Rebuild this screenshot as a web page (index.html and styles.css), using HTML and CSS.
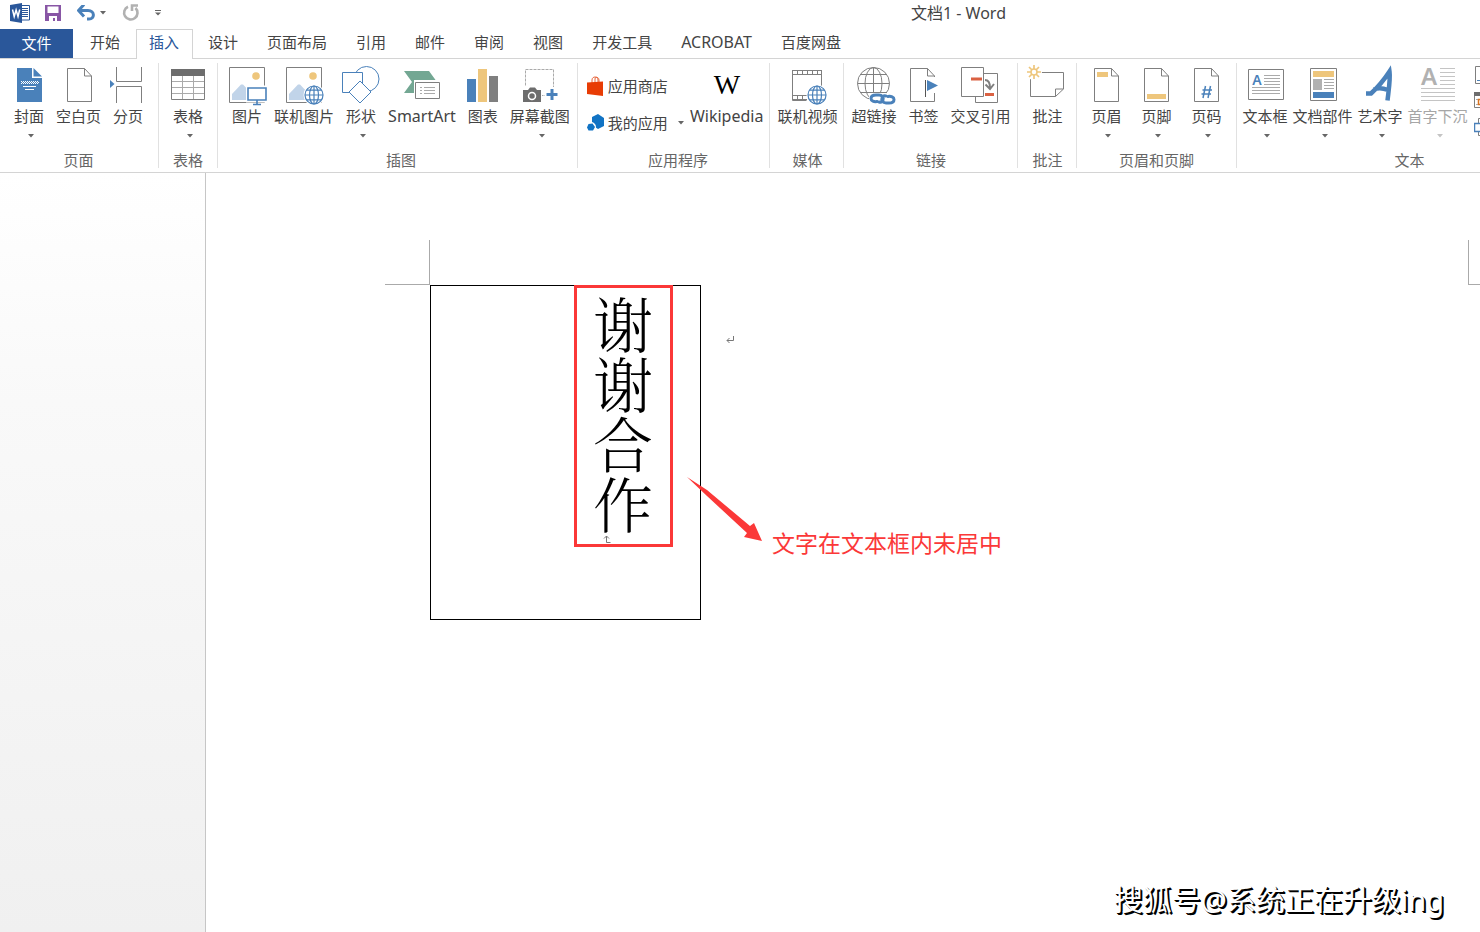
FILE: index.html
```html
<!DOCTYPE html>
<html lang="zh-CN">
<head>
<meta charset="utf-8">
<title>文档1 - Word</title>
<link rel="stylesheet" href="styles.css">
</head>
<body>
<svg class="defs" aria-hidden="true">
  <defs>
    <symbol id="caret" viewBox="0 0 10 4"><path d="M4 0h6l-3 3.500z" fill="currentColor"/></symbol>
    <g id="page"><path d="M8.500 4.500h17l7 7.500v25.500h-24z" fill="#fff" stroke="#7f7f7f"/><path d="M25.500 4.500v7.500h7" fill="none" stroke="#7f7f7f"/></g>
    <g id="globe"><circle r="10.500" fill="#fff"/><g fill="none" stroke="#4a81ba" stroke-width="1.200"><circle r="9"/><ellipse rx="4.500" ry="9"/><path d="M0-9v18M-9 0h18M-7.500-4.800h15M-7.500 4.800h15"/></g></g>
    <g id="photo"><path d="M2.500 3.500h35v35h-35z" fill="#fff" stroke="#7f7f7f"/><circle cx="29" cy="12" r="3.800" fill="#eec67c"/><path d="M5 36v-6l9-9.500h2l10 10.500v5z" fill="#c1d4e9"/></g>
  </defs>
</svg>
<div class="app">
  <header class="titlebar">
    <div class="quick">
      <svg class="quick-word" width="20" height="20" viewBox="0 0 20 20"><path d="M11 2.500h8.500v14.500h-8.500z" fill="#fff" stroke="#2a579a"/><path d="M12 5.500h6M12 7.500h6M12 9.500h6M12 11.500h6M12 13.500h6" stroke="#2a579a"/><path d="M0 2l12-2v20l-12-2z" fill="#2a579a"/><path d="M2.500 6.500l1.700 7 1.900-6.500 1.900 6.500 1.700-7" fill="none" stroke="#fff" stroke-width="1.500"/></svg>
      <button class="quick-btn quick-btn--save" aria-label="保存"><svg width="16" height="16" viewBox="0 0 16 16"><path d="M0 0h16v16h-16z" fill="#8856a5"/><path d="M2.500 1.500h11v6.500h-11zM4 11h8v5h-2v-3h-2v3h-4z" fill="#fff"/></svg></button>
      <button class="quick-btn quick-btn--undo" aria-label="撤消"><svg width="18" height="16" viewBox="0 0 18 16"><path d="M2 5.500h9c7 0 7 8.500 1 8.500h-2" fill="none" stroke="#4a81ba" stroke-width="3"/><path d="M7-.5L1.500 5.500 7 11.500" fill="none" stroke="#4a81ba" stroke-width="3"/></svg><svg class="caret" width="10" height="4"><use href="#caret"/></svg></button>
      <button class="quick-btn quick-btn--redo" aria-label="重复"><svg width="18" height="18" viewBox="0 0 18 18"><path d="M6 2.700A6.700 6.700 0 1 0 13.500 4" fill="none" stroke="#b1b1b1" stroke-width="2.600"/><path d="M10 7V1.500h6" fill="none" stroke="#b1b1b1" stroke-width="2.600"/></svg></button>
      <button class="quick-btn" aria-label="自定义快速访问工具栏"><svg width="6" height="6" viewBox="0 0 6 6"><path d="M0 .5h6" stroke="#666"/><path d="M0 2.500h6l-3 3z" fill="#666"/></svg></button>
    </div>
    <h1 class="title">文档1 - Word</h1>
  </header>

  <nav class="tabs">
    <button class="tab tab--file">文件</button>
    <button class="tab">开始</button>
    <button class="tab tab--active">插入</button>
    <button class="tab">设计</button>
    <button class="tab">页面布局</button>
    <button class="tab">引用</button>
    <button class="tab">邮件</button>
    <button class="tab">审阅</button>
    <button class="tab">视图</button>
    <button class="tab">开发工具</button>
    <button class="tab latin">ACROBAT</button>
    <button class="tab">百度网盘</button>
  </nav>

  <div class="ribbon">
    <section class="group group--pages">
      <div class="tools">
        <button class="tool"><svg class="icon" viewBox="0 0 40 42"><path d="M8 4h15v10h10v24h-25z" fill="#4a81ba"/><path d="M24.500 4l8.500 8.500h-8.500z" fill="#4a81ba"/><path d="M12 17.500h17M12 19.500h17" stroke="#fff" stroke-dasharray="1 1"/><path d="M13 18.500h17" stroke="#fff" stroke-dasharray="1 1"/><path d="M14 22.500h13M16 25.500h9" stroke="#fff"/></svg>封面<svg class="caret" width="10" height="4"><use href="#caret"/></svg></button>
        <button class="tool"><svg class="icon" viewBox="0 0 40 42"><use href="#page"/></svg>空白页</button>
        <button class="tool"><svg class="icon" viewBox="0 0 40 42"><path d="M8.500 3v14.500h25V3M8.500 39V22.500h25V39" fill="none" stroke="#7f7f7f"/><path d="M2 16l4.500 4-4.500 4z" fill="#4a81ba"/></svg>分页</button>
      </div>
      <h2 class="group-name">页面</h2>
    </section>
    <section class="group">
      <div class="tools">
        <button class="tool"><svg class="icon" viewBox="0 0 40 42"><path d="M3.500 5.500h33v30h-33z" fill="#fff" stroke="#7f7f7f"/><path d="M3 5h34v7h-34z" fill="#6d6d6d"/><path d="M4 17.500h32M4 23.500h32M4 29.500h32M14.500 12v23M25.500 12v23" stroke="#aaa"/></svg>表格<svg class="caret" width="10" height="4"><use href="#caret"/></svg></button>
      </div>
      <h2 class="group-name">表格</h2>
    </section>
    <section class="group group--art">
      <div class="tools">
        <button class="tool"><svg class="icon" viewBox="0 0 40 42"><use href="#photo"/><path d="M19 21.500h23v17h-23z" fill="#fff"/><path d="M21 24h18v12h-18zM26 40.500h8M30 36v5" fill="#fff" stroke="#4a81ba" stroke-width="1.600"/></svg>图片</button>
        <button class="tool"><svg class="icon" viewBox="0 0 40 42"><use href="#photo"/><use href="#globe" x="30" y="31"/></svg>联机图片</button>
        <button class="tool"><svg class="icon" viewBox="0 0 40 42"><g fill="#fff" stroke="#4a81ba"><circle cx="25.500" cy="15" r="12.500"/><path d="M1.500 8.500h20v20h-20z"/><path d="M19 17l11 11-11 11-11-11z"/></g></svg>形状<svg class="caret" width="10" height="4"><use href="#caret"/></svg></button>
        <button class="tool latin"><svg class="icon" viewBox="0 0 40 42"><path d="M2 7h25l8 11-8 11H2l8-11z" fill="#73a793"/><path d="M12 16h28v21h-28z" fill="#fff"/><path d="M13.500 18.500h24v16h-24z" fill="#fff" stroke="#7f7f7f"/><path d="M18 23.500h2M22 23.500h11M18 26.500h2M22 26.500h11M18 29.500h2M22 29.500h11" stroke="#aaa"/></svg>SmartArt</button>
        <button class="tool"><svg class="icon" viewBox="0 0 40 42"><path d="M4 15h9v23h-9z" fill="#4a81ba"/><path d="M15 5h9v33h-9z" fill="#eec67c"/><path d="M26 12h9v26h-9z" fill="#7f7f7f"/></svg>图表</button>
        <button class="tool"><svg class="icon" viewBox="0 0 40 42"><path d="M5.500 5.500h28v26h-28z" fill="none" stroke="#aaa" stroke-dasharray="3 1"/><path d="M1 22h21v17h-21zM25 23h14v14h-14z" fill="#fff"/><path d="M3 26h5l2-2.500h5l2 2.500h4v12h-18z" fill="#6d6d6d"/><circle cx="12" cy="32" r="3.500" fill="none" stroke="#fff" stroke-width="1.500"/><path d="M32 25v11M26.500 30.500h11" stroke="#4a81ba" stroke-width="3"/></svg>屏幕截图<svg class="caret" width="10" height="4"><use href="#caret"/></svg></button>
      </div>
      <h2 class="group-name">插图</h2>
    </section>
    <section class="group group--apps">
      <div class="tools">
        <div class="rows">
          <button class="row-tool"><svg width="18" height="20" viewBox="0 0 18 20"><path d="M5 7V4c0-4 6-4 6 0v3M8 7V3c0-3 4-2 4 1v3" fill="none" stroke="#e8683f"/><path d="M0 6.500l16-1v14.500l-16-2z" fill="#e83c05"/></svg>应用商店</button>
          <button class="row-tool"><svg width="18" height="20" viewBox="0 0 18 20"><path d="M5 4l6-3 6 4v8l-6 3-6-4z" fill="#1173c4"/><circle cx="4" cy="14" r="5" fill="#fff"/><path d="M1.500 11l4-.5 2.500 3.500-2 3.500h-4.500l-1.500-3z" fill="#1173c4"/></svg>我的应用<svg class="caret" width="10" height="4"><use href="#caret"/></svg></button>
        </div>
        <button class="tool latin"><svg class="icon" viewBox="0 0 40 42"><text x="20" y="30" class="glyph-wiki">W</text></svg>Wikipedia</button>
      </div>
      <h2 class="group-name">应用程序</h2>
    </section>
    <section class="group group--media">
      <div class="tools">
        <button class="tool"><svg class="icon" viewBox="0 0 40 42"><path d="M5.500 6v30.500h14M34.500 6v16" fill="none" stroke="#7f7f7f"/><path d="M5 6h30v5h-30zM5 31h15v5h-15z" fill="#7f7f7f"/><path d="M6 8.500h28M6 33.500h14" stroke="#fff" stroke-width="3" stroke-dasharray="4 1"/><use href="#globe" x="30" y="31"/></svg>联机视频</button>
      </div>
      <h2 class="group-name">媒体</h2>
    </section>
    <section class="group group--links">
      <div class="tools">
        <button class="tool"><svg class="icon" viewBox="0 0 40 42"><g fill="none" stroke="#7f7f7f"><circle cx="19.500" cy="19.500" r="16"/><ellipse cx="19.500" cy="19.500" rx="8.500" ry="16"/><path d="M19.500 3.500v32M3.500 19.500h32M6 10.500h27M6 28.500h27"/></g><path d="M15 29h17l9 5v8h-18l-8-6z" fill="#fff"/><g fill="none" stroke="#4a81ba" stroke-width="3" stroke-linecap="round"><path d="M23 37.500c-3 .5-6-.5-6-3s2-3.500 5-3.500h3c3 0 5 2.500 4 5-.5 1.500-2 2.500-4 2"/><path d="M34 32.500c3-.5 6 .500 6 3s-2 3.500-5 3.500h-3c-3 0-5-2.500-4-5 .5-1.500 2-2.500 4-2"/></g></svg>超链接</button>
        <button class="tool"><svg class="icon" viewBox="0 0 40 42"><use href="#page" x="-1"/><path d="M21 13h14v16h-14z" fill="#fff"/><path d="M22.500 16v17" stroke="#555"/><path d="M24 16l11 5.500-11 5.500z" fill="#4a81ba"/></svg>书签</button>
        <button class="tool"><svg class="icon" viewBox="0 0 40 42"><path d="M15.500 9.500h22v29h-22z" fill="#fff" stroke="#7f7f7f"/><path d="M1.500 3.500h22v29h-22z" fill="#fff" stroke="#7f7f7f"/><path d="M11 15h11M25 30.500h9" stroke="#da6142" stroke-width="3"/><path d="M25 16c4 0 5 3 5 8M25.500 20.500l4.500 4.500 4-5" fill="none" stroke="#7f7f7f" stroke-width="2"/></svg>交叉引用</button>
      </div>
      <h2 class="group-name">链接</h2>
    </section>
    <section class="group">
      <div class="tools">
        <button class="tool"><svg class="icon" viewBox="0 0 40 42"><path d="M3.500 12v20.500h25l8-7.500v-16.500h-24M28.500 32.500v-7.500h8" fill="none" stroke="#7f7f7f"/><circle cx="7" cy="8" r="8" fill="#fff"/><circle cx="7" cy="8" r="3" fill="none" stroke="#eec67c" stroke-width="1.500"/><path d="M7 1v4M7 11v4M0 8h4M10 8h4M2 3l3 3M9 10l3 3M12 3l-3 3M2 13l3-3" stroke="#eec67c" stroke-width="1.700"/></svg>批注</button>
      </div>
      <h2 class="group-name">批注</h2>
    </section>
    <section class="group group--header">
      <div class="tools">
        <button class="tool"><svg class="icon" viewBox="0 0 40 42"><use href="#page"/><path d="M11 8h11v5h-11z" fill="#eec67c"/></svg>页眉<svg class="caret" width="10" height="4"><use href="#caret"/></svg></button>
        <button class="tool"><svg class="icon" viewBox="0 0 40 42"><use href="#page"/><path d="M11 30h19v5h-19z" fill="#eec67c"/></svg>页脚<svg class="caret" width="10" height="4"><use href="#caret"/></svg></button>
        <button class="tool"><svg class="icon" viewBox="0 0 40 42"><use href="#page"/><path d="M19.500 22l-2.500 12M24.500 22l-2.500 12M16.500 26h9.500M15.500 30h9.500" fill="none" stroke="#4a81ba" stroke-width="1.500"/></svg>页码<svg class="caret" width="10" height="4"><use href="#caret"/></svg></button>
      </div>
      <h2 class="group-name">页眉和页脚</h2>
    </section>
    <section class="group group--text">
      <div class="tools">
        <button class="tool"><svg class="icon" viewBox="0 0 40 42"><path d="M3.500 5.500h35v30h-35z" fill="#fff" stroke="#7f7f7f"/><text x="12" y="21" class="glyph-a glyph-a--small">A</text><path d="M19 11.500h16M19 14.500h16M19 17.500h16M19 20.500h16M7 23.500h28M7 26.500h28M7 29.500h28" stroke="#aaa"/></svg>文本框<svg class="caret" width="10" height="4"><use href="#caret"/></svg></button>
        <button class="tool"><svg class="icon" viewBox="0 0 40 42"><path d="M7.500 4.500h26v32h-26z" fill="#fff" stroke="#7f7f7f"/><path d="M10 7h21v6h-21z" fill="#eec67c"/><path d="M10 15h9v11h-9z" fill="#b1b1b1"/><path d="M21 15.500h10M21 18.500h10M21 21.500h10M21 24.500h10" stroke="#aaa"/><path d="M10 28h21v6h-21z" fill="#4a81ba"/></svg>文档部件<svg class="caret" width="10" height="4"><use href="#caret"/></svg></button>
        <button class="tool"><svg class="icon" viewBox="0 0 40 42"><path d="M6 29.500h5C17 24 24 16 29.500 7.500c1 7-.500 16-2 29M14 25.500c4-2 9-1.500 14 .5" fill="none" stroke="#4a81ba" stroke-width="4.500"/></svg>艺术字<svg class="caret" width="10" height="4"><use href="#caret"/></svg></button>
        <button class="tool" disabled><svg class="icon" viewBox="0 0 40 42"><text x="11" y="21" class="glyph-a glyph-a--drop">A</text><path d="M22 4.500h15M22 8.500h15M22 12.500h15M22 16.500h15M22 20.500h15M3 24.500h34M3 28.500h34M3 32.500h34M3 36.500h34" stroke="#c4c4c4"/></svg>首字下沉<svg class="caret" width="10" height="4"><use href="#caret"/></svg></button>
        <div class="mini">
          <button class="mini-btn" aria-label="签名行"><svg width="18" height="18" viewBox="0 0 18 18"><path d="M1.500.5h16v17h-16z" fill="#fff" stroke="#7f7f7f"/><path d="M3 14.500h15" stroke="#4a81ba"/></svg></button>
          <button class="mini-btn" aria-label="日期和时间"><svg width="18" height="18" viewBox="0 0 18 18"><path d="M.5.500h17v15h-17z" fill="#fff" stroke="#7f7f7f"/><path d="M0 0h18v4H0z" fill="#6d6d6d"/><path d="M2 7.500h14M2 12.500h14" stroke="#aaa" stroke-dasharray="2 1"/><path d="M4.500 7.500h5v5h-5z" fill="#fff" stroke="#d9731f" stroke-width="1.500"/></svg></button>
          <button class="mini-btn" aria-label="对象"><svg width="18" height="18" viewBox="0 0 18 18"><path d="M4.500.5h13v17h-13z" fill="#fff" stroke="#7f7f7f"/><path d="M.5 5.500h13v8h-13z" fill="#fff" stroke="#4a81ba" stroke-width="1.500"/></svg></button>
        </div>
      </div>
      <h2 class="group-name">文本</h2>
    </section>
  </div>

  <div class="workspace">
    <aside class="side"></aside>
    <main class="canvas">
      <i class="crop crop--left"></i>
      <i class="crop crop--right"></i>
      <div class="textbox"></div>
      <div class="highlight"><p class="vertical">谢谢合作</p>
        <svg class="mark" width="8" height="8" viewBox="0 0 8 8"><path d="M3.500 1v6.500h4M1 3.500l2.500-2.500 2.500 2.500" fill="none" stroke="#777"/></svg>
      </div>
      <svg class="return" width="8" height="8" viewBox="0 0 8 8"><path d="M7.500 0v4.500h-6.500M3.500 2l-2.500 2.500 2.500 2.500" fill="none" stroke="#777"/></svg>
      <svg class="arrow" width="76" height="65" viewBox="0 0 76 65"><path d="M0 0L20 13 63 49l4-3 8 18-18-4 3-4L20 19Z" fill="#fb3838"/></svg>
      <p class="note">文字在文本框内未居中</p>
      <p class="watermark">搜狐号@系统正在升级ing</p>
    </main>
  </div>
</div>
</body>
</html>
```
FILE: styles.css
```css
* { box-sizing: border-box; }

body {
  margin: 0;
  background: #fff;
  color: #444;
  font: 15px/20px "Noto Sans", "Noto Sans CJK SC", sans-serif;
}

button {
  margin: 0;
  padding: 0;
  border: 0;
  background: none;
  color: inherit;
  font: inherit;
  white-space: nowrap;
}

h1, h2, p { margin: 0; font-size: inherit; font-weight: 400; }
svg { display: block; flex: none; }
.defs { position: absolute; width: 0; height: 0; }
.latin { font-size: 16px; line-height: 20px; }

.app {
  display: flex;
  flex-direction: column;
  height: 100vh;
  overflow: hidden;
}

/* Title bar */
.titlebar {
  display: flex;
  flex: none;
  align-items: center;
  justify-content: space-between;
  height: 28px;
  padding: 0 474px 2px 10px;
}
.quick { display: flex; align-items: center; }
.quick-btn { display: flex; align-items: center; }
.quick-btn--save { margin-left: 15px; }
.quick-btn--undo { margin: 0 16px; }
.quick-btn--undo .caret { margin-left: 1px; }
.quick-btn--redo { margin-right: 15px; }
.title { font-size: 16px; line-height: 20px; }

/* Tabs */
.tabs {
  display: flex;
  flex: none;
  gap: 1px;
  height: 31px;
  padding-top: 1px;
  border-bottom: 1px solid #d4d4d4;
}
.tab { padding: 0 14px 4px; }
.tab--file {
  width: 73px;
  margin-right: 2px;
  padding-bottom: 2px;
  background: #2a579a;
  color: #fff;
}
.tab--active {
  height: 30px;
  margin-left: 1px;
  padding: 0 13px 5px 12px;
  border: 1px solid #d4d4d4;
  border-bottom: 0;
  background: #fff;
  color: #2a579a;
}

/* Ribbon */
.ribbon {
  display: flex;
  flex: none;
  height: 114px;
  padding: 4px 0;
  overflow: hidden;
  border-bottom: 1px solid #d4d4d4;
}
.group {
  display: flex;
  flex: none;
  flex-direction: column;
  justify-content: space-between;
  padding: 0 8px;
  border-right: 1px solid #e1e1e1;
}
.group--pages { padding-right: 9px; }
.group--art { padding-right: 1px; }
.group--apps { padding: 0 0 0 9px; }
.group--media { padding: 0 0 0 1px; }
.group--links { padding: 0 1px; }
.group--header { padding: 0 4px; }
.group--text { width: 347px; padding: 0 4px; }
.group-name { color: #666; line-height: 16px; text-align: center; }

.tools { display: flex; }
.tool {
  display: flex;
  flex-direction: column;
  align-items: center;
  padding: 1px 6px 0;
}
.tool:disabled { color: #a6a6a6; }
.group--header .tool { padding: 1px 10px 0; }
.group--text .tool { padding: 1px 3px 0 2px; }
.icon { width: 40px; height: 42px; overflow: visible; margin: 0 -5px; }
.caret { color: #666; }
.tool .caret { margin-top: 8px; }
.tool:disabled .caret { color: #c4c4c4; }

.rows {
  display: flex;
  flex-direction: column;
  gap: 17px;
  padding-top: 13px;
}
.row-tool { display: flex; align-items: center; gap: 3px; }
.row-tool .caret { margin-left: 3px; }

.mini { display: flex; flex-direction: column; gap: 8px; padding: 3px 0 0 3px; }

.glyph-wiki {
  fill: #000;
  font: 28px "Liberation Serif", serif;
  text-anchor: middle;
}
.glyph-a { fill: #4a81ba; font-family: "Noto Sans", sans-serif; font-weight: 600; text-anchor: middle; }
.glyph-a--small { font-size: 14px; }
.glyph-a--drop { fill: #b1b1b1; font-size: 24px; }

/* Document */
.workspace { display: flex; flex: 1; min-height: 0; }
.side {
  flex: none;
  width: 206px;
  border-right: 1px solid #c6c6c6;
  background: linear-gradient(#fff, #f9f9f9 30%, #f0f0f0);
}
.canvas { position: relative; flex: 1; overflow: hidden; }

.crop { position: absolute; top: 67px; width: 45px; height: 45px; border-bottom: 1px solid #aaa; }
.crop--left { left: 179px; border-right: 1px solid #aaa; }
.crop--right { left: 1262px; border-left: 1px solid #aaa; }

.textbox {
  position: absolute;
  left: 224px;
  top: 112px;
  width: 271px;
  height: 335px;
  border: 1px solid #000;
}
.highlight {
  position: absolute;
  left: 368px;
  top: 112px;
  width: 99px;
  height: 262px;
  padding-top: 7px;
  border: 3px solid #fb3838;
}
.vertical {
  color: #000;
  font: 300 60px/92px "Noto Serif CJK SC", "Noto Sans CJK SC", serif;
  writing-mode: vertical-rl;
}
.mark { position: absolute; left: 26px; top: 247px; }
.return { position: absolute; left: 520px; top: 163px; }
.arrow { position: absolute; left: 481px; top: 304px; }
.note {
  position: absolute;
  left: 566px;
  top: 354px;
  color: #fb3838;
  font-size: 23px;
  line-height: 32px;
  white-space: nowrap;
}
.watermark {
  position: absolute;
  right: 36px;
  bottom: 12px;
  color: #fff;
  font-size: 29px;
  line-height: 40px;
  text-shadow: 1px 1px 0 #000, 2px 2px 0 #000;
  white-space: nowrap;
}
```
